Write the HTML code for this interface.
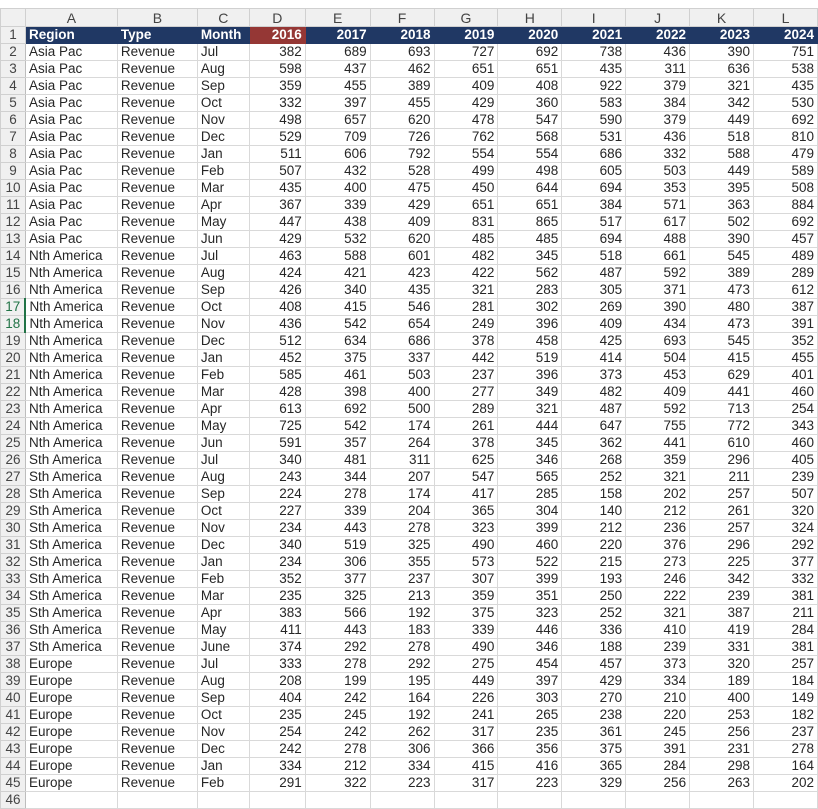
<!DOCTYPE html>
<html><head><meta charset="utf-8"><style>
body{margin:0;width:818px;height:795px;overflow:hidden;background:#fff;font-family:"Liberation Sans",Arial,sans-serif;}
.top{position:absolute;left:0;top:0;width:818px;height:8px;background:#fff;}
table{position:absolute;left:0;top:8px;border-collapse:collapse;table-layout:fixed;font-size:13.5px;color:#262626;}
td{height:16px;line-height:16px;border:1px solid #d9d9d9;padding:0 3px;white-space:nowrap;overflow:hidden;text-align:right;}
tr.ch td{height:17px;background:#f0f0f0;text-align:center;color:#444;border-color:#d0d0d0;font-size:14px;}
td.rn{background:#f0f0f0;text-align:center;color:#444;padding:0;border-color:#d0d0d0;border-right:1px solid #bdbdbd;}
td.l{text-align:left;}
tr.h td{background:#203864;color:#fff;font-weight:bold;border-color:#203864;}
tr.h td.rn{background:#f0f0f0;color:#444;font-weight:normal;border-color:#d0d0d0;}
tr.h td.red{background:#953735;border-color:#953735;}
td.sel{color:#217346;border-right:2px solid #217346;}
</style></head><body>
<div class="top"></div>
<table>
<colgroup><col style="width:25px"><col style="width:92px"><col style="width:80px"><col style="width:52px"><col style="width:56px"><col style="width:65px"><col style="width:64px"><col style="width:64px"><col style="width:64px"><col style="width:64px"><col style="width:64px"><col style="width:64px"><col style="width:64px"></colgroup>
<tr class="ch"><td></td><td>A</td><td>B</td><td>C</td><td>D</td><td>E</td><td>F</td><td>G</td><td>H</td><td>I</td><td>J</td><td>K</td><td>L</td></tr>
<tr class="h"><td class="rn">1</td><td class="l">Region</td><td class="l">Type</td><td class="l">Month</td><td class="red">2016</td><td>2017</td><td>2018</td><td>2019</td><td>2020</td><td>2021</td><td>2022</td><td>2023</td><td>2024</td></tr>
<tr><td class="rn">2</td><td class="l">Asia Pac</td><td class="l">Revenue</td><td class="l">Jul</td><td>382</td><td>689</td><td>693</td><td>727</td><td>692</td><td>738</td><td>436</td><td>390</td><td>751</td></tr>
<tr><td class="rn">3</td><td class="l">Asia Pac</td><td class="l">Revenue</td><td class="l">Aug</td><td>598</td><td>437</td><td>462</td><td>651</td><td>651</td><td>435</td><td>311</td><td>636</td><td>538</td></tr>
<tr><td class="rn">4</td><td class="l">Asia Pac</td><td class="l">Revenue</td><td class="l">Sep</td><td>359</td><td>455</td><td>389</td><td>409</td><td>408</td><td>922</td><td>379</td><td>321</td><td>435</td></tr>
<tr><td class="rn">5</td><td class="l">Asia Pac</td><td class="l">Revenue</td><td class="l">Oct</td><td>332</td><td>397</td><td>455</td><td>429</td><td>360</td><td>583</td><td>384</td><td>342</td><td>530</td></tr>
<tr><td class="rn">6</td><td class="l">Asia Pac</td><td class="l">Revenue</td><td class="l">Nov</td><td>498</td><td>657</td><td>620</td><td>478</td><td>547</td><td>590</td><td>379</td><td>449</td><td>692</td></tr>
<tr><td class="rn">7</td><td class="l">Asia Pac</td><td class="l">Revenue</td><td class="l">Dec</td><td>529</td><td>709</td><td>726</td><td>762</td><td>568</td><td>531</td><td>436</td><td>518</td><td>810</td></tr>
<tr><td class="rn">8</td><td class="l">Asia Pac</td><td class="l">Revenue</td><td class="l">Jan</td><td>511</td><td>606</td><td>792</td><td>554</td><td>554</td><td>686</td><td>332</td><td>588</td><td>479</td></tr>
<tr><td class="rn">9</td><td class="l">Asia Pac</td><td class="l">Revenue</td><td class="l">Feb</td><td>507</td><td>432</td><td>528</td><td>499</td><td>498</td><td>605</td><td>503</td><td>449</td><td>589</td></tr>
<tr><td class="rn">10</td><td class="l">Asia Pac</td><td class="l">Revenue</td><td class="l">Mar</td><td>435</td><td>400</td><td>475</td><td>450</td><td>644</td><td>694</td><td>353</td><td>395</td><td>508</td></tr>
<tr><td class="rn">11</td><td class="l">Asia Pac</td><td class="l">Revenue</td><td class="l">Apr</td><td>367</td><td>339</td><td>429</td><td>651</td><td>651</td><td>384</td><td>571</td><td>363</td><td>884</td></tr>
<tr><td class="rn">12</td><td class="l">Asia Pac</td><td class="l">Revenue</td><td class="l">May</td><td>447</td><td>438</td><td>409</td><td>831</td><td>865</td><td>517</td><td>617</td><td>502</td><td>692</td></tr>
<tr><td class="rn">13</td><td class="l">Asia Pac</td><td class="l">Revenue</td><td class="l">Jun</td><td>429</td><td>532</td><td>620</td><td>485</td><td>485</td><td>694</td><td>488</td><td>390</td><td>457</td></tr>
<tr><td class="rn">14</td><td class="l">Nth America</td><td class="l">Revenue</td><td class="l">Jul</td><td>463</td><td>588</td><td>601</td><td>482</td><td>345</td><td>518</td><td>661</td><td>545</td><td>489</td></tr>
<tr><td class="rn">15</td><td class="l">Nth America</td><td class="l">Revenue</td><td class="l">Aug</td><td>424</td><td>421</td><td>423</td><td>422</td><td>562</td><td>487</td><td>592</td><td>389</td><td>289</td></tr>
<tr><td class="rn">16</td><td class="l">Nth America</td><td class="l">Revenue</td><td class="l">Sep</td><td>426</td><td>340</td><td>435</td><td>321</td><td>283</td><td>305</td><td>371</td><td>473</td><td>612</td></tr>
<tr><td class="rn sel">17</td><td class="l">Nth America</td><td class="l">Revenue</td><td class="l">Oct</td><td>408</td><td>415</td><td>546</td><td>281</td><td>302</td><td>269</td><td>390</td><td>480</td><td>387</td></tr>
<tr><td class="rn sel">18</td><td class="l">Nth America</td><td class="l">Revenue</td><td class="l">Nov</td><td>436</td><td>542</td><td>654</td><td>249</td><td>396</td><td>409</td><td>434</td><td>473</td><td>391</td></tr>
<tr><td class="rn">19</td><td class="l">Nth America</td><td class="l">Revenue</td><td class="l">Dec</td><td>512</td><td>634</td><td>686</td><td>378</td><td>458</td><td>425</td><td>693</td><td>545</td><td>352</td></tr>
<tr><td class="rn">20</td><td class="l">Nth America</td><td class="l">Revenue</td><td class="l">Jan</td><td>452</td><td>375</td><td>337</td><td>442</td><td>519</td><td>414</td><td>504</td><td>415</td><td>455</td></tr>
<tr><td class="rn">21</td><td class="l">Nth America</td><td class="l">Revenue</td><td class="l">Feb</td><td>585</td><td>461</td><td>503</td><td>237</td><td>396</td><td>373</td><td>453</td><td>629</td><td>401</td></tr>
<tr><td class="rn">22</td><td class="l">Nth America</td><td class="l">Revenue</td><td class="l">Mar</td><td>428</td><td>398</td><td>400</td><td>277</td><td>349</td><td>482</td><td>409</td><td>441</td><td>460</td></tr>
<tr><td class="rn">23</td><td class="l">Nth America</td><td class="l">Revenue</td><td class="l">Apr</td><td>613</td><td>692</td><td>500</td><td>289</td><td>321</td><td>487</td><td>592</td><td>713</td><td>254</td></tr>
<tr><td class="rn">24</td><td class="l">Nth America</td><td class="l">Revenue</td><td class="l">May</td><td>725</td><td>542</td><td>174</td><td>261</td><td>444</td><td>647</td><td>755</td><td>772</td><td>343</td></tr>
<tr><td class="rn">25</td><td class="l">Nth America</td><td class="l">Revenue</td><td class="l">Jun</td><td>591</td><td>357</td><td>264</td><td>378</td><td>345</td><td>362</td><td>441</td><td>610</td><td>460</td></tr>
<tr><td class="rn">26</td><td class="l">Sth America</td><td class="l">Revenue</td><td class="l">Jul</td><td>340</td><td>481</td><td>311</td><td>625</td><td>346</td><td>268</td><td>359</td><td>296</td><td>405</td></tr>
<tr><td class="rn">27</td><td class="l">Sth America</td><td class="l">Revenue</td><td class="l">Aug</td><td>243</td><td>344</td><td>207</td><td>547</td><td>565</td><td>252</td><td>321</td><td>211</td><td>239</td></tr>
<tr><td class="rn">28</td><td class="l">Sth America</td><td class="l">Revenue</td><td class="l">Sep</td><td>224</td><td>278</td><td>174</td><td>417</td><td>285</td><td>158</td><td>202</td><td>257</td><td>507</td></tr>
<tr><td class="rn">29</td><td class="l">Sth America</td><td class="l">Revenue</td><td class="l">Oct</td><td>227</td><td>339</td><td>204</td><td>365</td><td>304</td><td>140</td><td>212</td><td>261</td><td>320</td></tr>
<tr><td class="rn">30</td><td class="l">Sth America</td><td class="l">Revenue</td><td class="l">Nov</td><td>234</td><td>443</td><td>278</td><td>323</td><td>399</td><td>212</td><td>236</td><td>257</td><td>324</td></tr>
<tr><td class="rn">31</td><td class="l">Sth America</td><td class="l">Revenue</td><td class="l">Dec</td><td>340</td><td>519</td><td>325</td><td>490</td><td>460</td><td>220</td><td>376</td><td>296</td><td>292</td></tr>
<tr><td class="rn">32</td><td class="l">Sth America</td><td class="l">Revenue</td><td class="l">Jan</td><td>234</td><td>306</td><td>355</td><td>573</td><td>522</td><td>215</td><td>273</td><td>225</td><td>377</td></tr>
<tr><td class="rn">33</td><td class="l">Sth America</td><td class="l">Revenue</td><td class="l">Feb</td><td>352</td><td>377</td><td>237</td><td>307</td><td>399</td><td>193</td><td>246</td><td>342</td><td>332</td></tr>
<tr><td class="rn">34</td><td class="l">Sth America</td><td class="l">Revenue</td><td class="l">Mar</td><td>235</td><td>325</td><td>213</td><td>359</td><td>351</td><td>250</td><td>222</td><td>239</td><td>381</td></tr>
<tr><td class="rn">35</td><td class="l">Sth America</td><td class="l">Revenue</td><td class="l">Apr</td><td>383</td><td>566</td><td>192</td><td>375</td><td>323</td><td>252</td><td>321</td><td>387</td><td>211</td></tr>
<tr><td class="rn">36</td><td class="l">Sth America</td><td class="l">Revenue</td><td class="l">May</td><td>411</td><td>443</td><td>183</td><td>339</td><td>446</td><td>336</td><td>410</td><td>419</td><td>284</td></tr>
<tr><td class="rn">37</td><td class="l">Sth America</td><td class="l">Revenue</td><td class="l">June</td><td>374</td><td>292</td><td>278</td><td>490</td><td>346</td><td>188</td><td>239</td><td>331</td><td>381</td></tr>
<tr><td class="rn">38</td><td class="l">Europe</td><td class="l">Revenue</td><td class="l">Jul</td><td>333</td><td>278</td><td>292</td><td>275</td><td>454</td><td>457</td><td>373</td><td>320</td><td>257</td></tr>
<tr><td class="rn">39</td><td class="l">Europe</td><td class="l">Revenue</td><td class="l">Aug</td><td>208</td><td>199</td><td>195</td><td>449</td><td>397</td><td>429</td><td>334</td><td>189</td><td>184</td></tr>
<tr><td class="rn">40</td><td class="l">Europe</td><td class="l">Revenue</td><td class="l">Sep</td><td>404</td><td>242</td><td>164</td><td>226</td><td>303</td><td>270</td><td>210</td><td>400</td><td>149</td></tr>
<tr><td class="rn">41</td><td class="l">Europe</td><td class="l">Revenue</td><td class="l">Oct</td><td>235</td><td>245</td><td>192</td><td>241</td><td>265</td><td>238</td><td>220</td><td>253</td><td>182</td></tr>
<tr><td class="rn">42</td><td class="l">Europe</td><td class="l">Revenue</td><td class="l">Nov</td><td>254</td><td>242</td><td>262</td><td>317</td><td>235</td><td>361</td><td>245</td><td>256</td><td>237</td></tr>
<tr><td class="rn">43</td><td class="l">Europe</td><td class="l">Revenue</td><td class="l">Dec</td><td>242</td><td>278</td><td>306</td><td>366</td><td>356</td><td>375</td><td>391</td><td>231</td><td>278</td></tr>
<tr><td class="rn">44</td><td class="l">Europe</td><td class="l">Revenue</td><td class="l">Jan</td><td>334</td><td>212</td><td>334</td><td>415</td><td>416</td><td>365</td><td>284</td><td>298</td><td>164</td></tr>
<tr><td class="rn">45</td><td class="l">Europe</td><td class="l">Revenue</td><td class="l">Feb</td><td>291</td><td>322</td><td>223</td><td>317</td><td>223</td><td>329</td><td>256</td><td>263</td><td>202</td></tr>
<tr><td class="rn">46</td><td class="l"></td><td></td><td></td><td></td><td></td><td></td><td></td><td></td><td></td><td></td><td></td><td></td></tr>
</table>
</body></html>
